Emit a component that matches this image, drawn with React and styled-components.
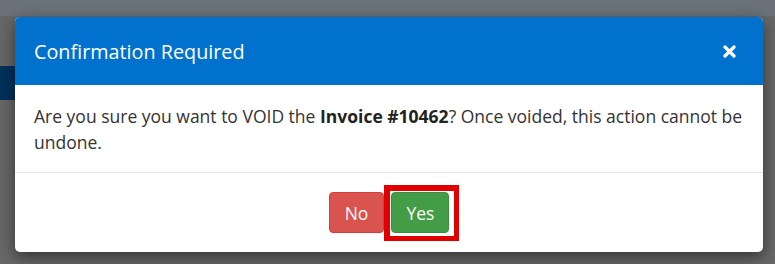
import React from "react";
import styled, { createGlobalStyle } from "styled-components";

const GlobalStyle = createGlobalStyle`
  body {
    margin: 0;
    background: #676767;
    font-family: "Open Sans", "Noto Sans", sans-serif;
  }
`;

const Page = styled.div`
  position: relative;
  height: 264px;
  overflow: hidden;
  background: #676767;
`;

const TopBar = styled.div`
  height: 16px;
  background: #6b7178;
`;

const SideBlock = styled.div`
  margin-top: 50px;
  width: 40px;
  height: 34px;
  background: #03315b;
`;

const Modal = styled.div`
  position: absolute;
  left: 15px;
  top: 17px;
  width: 748px;
  background: #fff;
  border-radius: 5px;
  box-shadow: 0 5px 15px rgba(0, 0, 0, 0.5);
  overflow: hidden;
`;

const Header = styled.div`
  display: flex;
  align-items: center;
  justify-content: space-between;
  height: 68px;
  padding: 0 27px 0 19px;
  background: #0072ce;
  color: #fff;
`;

const Title = styled.h4`
  margin: 0;
  font-size: 19.8px;
  font-weight: 400;
`;

const CloseButton = styled.button`
  display: flex;
  padding: 0;
  border: none;
  background: transparent;
  cursor: pointer;
`;

const Body = styled.div`
  padding: 18px 20px 17px 19px;
  font-size: 17.5px;
  line-height: 26px;
  color: #333;

  strong {
    font-weight: 700;
    color: #222;
  }
`;

const Footer = styled.div`
  display: flex;
  justify-content: center;
  gap: 7px;
  padding: 19px 20px;
  border-top: 1px solid #e5e5e5;
`;

const Button = styled.button`
  height: 41px;
  padding: 0 ${(p) => p.$pad}px;
  border: 1px solid ${(p) => p.$border};
  border-radius: 4px;
  background: ${(p) => p.$bg};
  color: #fff;
  font-family: inherit;
  font-size: 17.5px;
  cursor: pointer;
`;

const Marked = styled.span`
  position: relative;
  display: inline-flex;
`;

const Highlight = styled.span`
  position: absolute;
  top: -7px;
  left: -7px;
  right: -10px;
  bottom: -8px;
  border-style: solid;
  border-color: #e10000;
  border-width: 6px 5px 5px 6px;
  pointer-events: none;
`;

const CloseIcon = () => (
  <svg width="13" height="13" viewBox="0 0 13 13">
    <path
      d="M2 2 L11 11 M11 2 L2 11"
      stroke="#fff"
      strokeWidth="3.2"
      strokeLinecap="round"
    />
  </svg>
);

const App = () => {
  return (
    <>
      <GlobalStyle />
      <Page>
        <TopBar />
        <SideBlock />
        <Modal>
          <Header>
            <Title>Confirmation Required</Title>
            <CloseButton aria-label="Close">
              <CloseIcon />
            </CloseButton>
          </Header>
          <Body>
            Are you sure you want to VOID the <strong>Invoice #10462</strong>?
            Once voided, this action cannot be undone.
          </Body>
          <Footer>
            <Button $bg="#d9534f" $border="#d43f3a" $pad={15}>
              No
            </Button>
            <Marked>
              <Button $bg="#439c46" $border="#3d8b40" $pad={14}>
                Yes
              </Button>
              <Highlight />
            </Marked>
          </Footer>
        </Modal>
      </Page>
    </>
  );
};

export default App;
